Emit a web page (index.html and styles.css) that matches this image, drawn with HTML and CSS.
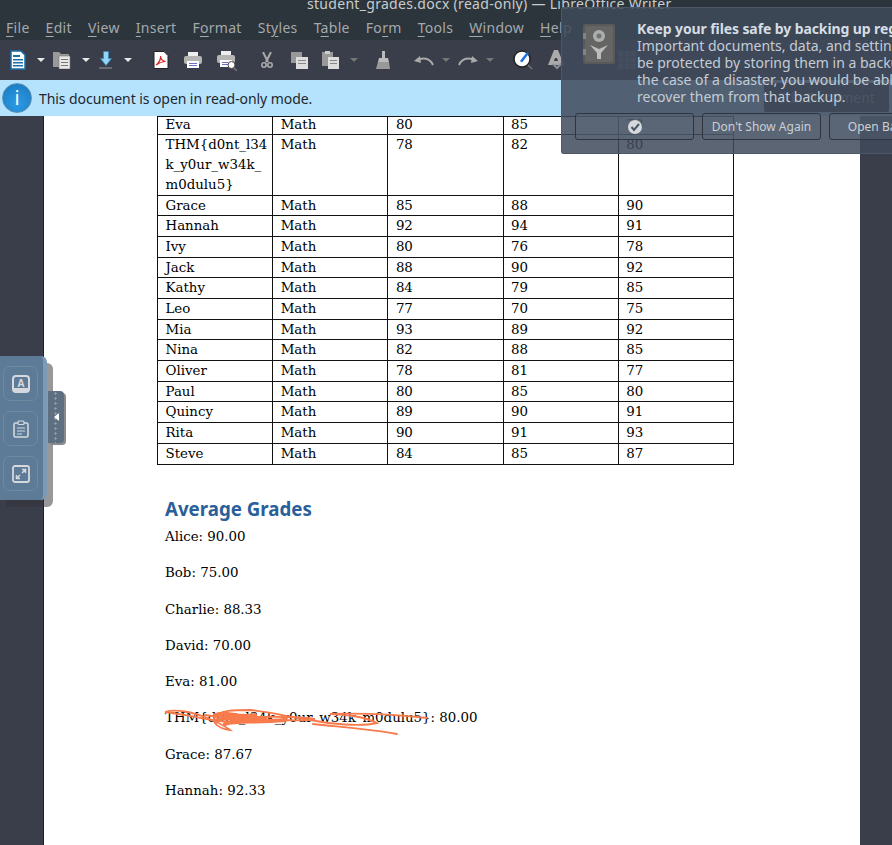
FILE: index.html
```html
<!DOCTYPE html>
<html lang="en">
<head>
    <meta charset="UTF-8">
    <meta name="viewport" content="width=device-width, initial-scale=1.0">
    <title>student_grades.docx (read-only) — LibreOffice Writer</title>
    <link rel="stylesheet" href="styles.css">
</head>
<body>
    <header class="titlebar">student_grades.docx (read-only) — LibreOffice Writer</header>

    <nav class="menubar">
        <span><u>F</u>ile</span>
        <span><u>E</u>dit</span>
        <span><u>V</u>iew</span>
        <span><u>I</u>nsert</span>
        <span>F<u>o</u>rmat</span>
        <span>St<u>y</u>les</span>
        <span>T<u>a</u>ble</span>
        <span>Fo<u>r</u>m</span>
        <span><u>T</u>ools</span>
        <span><u>W</u>indow</span>
        <span><u>H</u>elp</span>
    </nav>

    <div class="toolbar">
        <svg class="tool w-doc" viewBox="0 0 16 20"><path d="M1 1h10l4 4v14H1z" fill="#fff" stroke="#1b6ea8" stroke-width="1.5"/><path d="M3 5h7v2H3zM3 9h10v1.5H3zM3 12h10v1.5H3zM3 15h10v1.5H3z" fill="#1b6ea8"/></svg>
        <i class="drop"></i>
        <svg class="tool w-open" viewBox="0 0 18 18"><path d="M0 1h6l2 2h8v13H0z" fill="#9a9a9a"/><path d="M6 5h11v13H6z" fill="#e8e8e8" stroke="#777" stroke-width=".6"/><path d="M8 8h7v1H8zM8 11h7v1H8zM8 14h7v1H8z" fill="#777"/></svg>
        <i class="drop"></i>
        <svg class="tool w-save" viewBox="0 0 14 18"><path d="M4.500 .5h5v7h3l-5.500 7-5.500-7h3z" fill="#8fd6f7" stroke="#3a88b5" stroke-width=".8"/><path d="M0 17h13" stroke="#8a8d96" stroke-width="1.2"/></svg>
        <i class="drop"></i>
        <svg class="tool w-pdf" viewBox="0 0 16 18"><path d="M1 .5h10l4 4v13H1z" fill="#fff" stroke="#222"/><path d="M3 14c3-2 5-6 4.500-9 0 3 2 5 5 5.500-3 0-6 1-9.500 3.500z" fill="none" stroke="#d8282f" stroke-width="1.200"/></svg>
        <svg class="tool w-print" viewBox="0 0 18 18"><path d="M4 1h10v5H4z" fill="#eee"/><rect y="5" width="18" height="8" rx="2" fill="#b5b5b5"/><path d="M3 10h12v7H3z" fill="#fff"/><path d="M5 12h8v1H5zM5 14h8v1H5z" fill="#6b6fd0"/></svg>
        <svg class="tool w-preview" viewBox="0 0 21 21"><path d="M4 1h10v5H4z" fill="#eee"/><rect y="5" width="18" height="8" rx="2" fill="#b5b5b5"/><path d="M3 10h12v7H3z" fill="#fff"/><path d="M5 12h6v1H5zM5 14h6v1H5z" fill="#6b6fd0"/><circle cx="14.500" cy="15" r="3.500" fill="#fff" stroke="#444"/><path d="M17 18l3 3" stroke="#777" stroke-width="1.500"/></svg>
        <svg class="tool w-cut" viewBox="0 0 12 16"><path d="M2 0l5 10M10 0L5 10" stroke="#aaa" stroke-width="2"/><circle cx="3" cy="13" r="2.200" fill="none" stroke="#aaa" stroke-width="1.600"/><circle cx="9" cy="13" r="2.200" fill="none" stroke="#aaa" stroke-width="1.600"/></svg>
        <svg class="tool w-copy" viewBox="0 0 17 17"><path d="M0 0h11v11H0z" fill="#999"/><path d="M5 5h12v12H5z" fill="#ddd"/><path d="M7 8h8v1H7zM7 11h8v1H7z" fill="#888"/></svg>
        <svg class="tool w-paste" viewBox="0 0 17 18"><path d="M0 1h11v14H0z" fill="#999"/><path d="M3 0h5v3H3z" fill="#ccc"/><path d="M6 6h11v12H6z" fill="#ddd"/><path d="M8 9h7v1H8zM8 12h7v1H8z" fill="#888"/></svg>
        <i class="drop dim"></i>
        <svg class="tool w-brush" viewBox="0 0 15 18"><path d="M6 0h3v7h3l1 4H2l1-4h3z" fill="#bbb"/><path d="M2 11h11l1 7H0z" fill="#999"/></svg>
        <svg class="tool w-undo" viewBox="0 0 20 12"><path d="M19 11C16 4 9 3 3 6" fill="none" stroke="#aaa" stroke-width="2"/><path d="M0 7l6-5 1 7z" fill="#aaa"/></svg>
        <i class="drop dim tight"></i>
        <svg class="tool w-redo" viewBox="0 0 20 12"><path d="M1 11C4 4 11 3 17 6" fill="none" stroke="#aaa" stroke-width="2"/><path d="M20 7l-6-5-1 7z" fill="#aaa"/></svg>
        <i class="drop dim tight"></i>
        <svg class="tool w-spell" viewBox="0 0 20 20"><circle cx="9" cy="9" r="8" fill="#fff" stroke="#222" stroke-width="1.500"/><path d="M7 11l7-9 2 1.500-7 9z" fill="#1c6fd8"/><path d="M15 15l4 4" stroke="#777" stroke-width="1.500"/></svg>
        <svg class="tool w-auto" viewBox="0 0 19 20"><path d="M7 0h4l6 15H1z" fill="#aaa"/><path d="M8 8h2l1 3H7z" fill="#3a3d4a"/><path d="M6 14l4 4 6-6" fill="none" stroke="#8a8d96" stroke-width="2"/></svg>
        <svg class="tool w-behind" viewBox="0 0 18 18"><path d="M0 0h18v18H0z" fill="#5a6878"/><path d="M0 6h18M0 12h18M6 0v18M12 0v18" stroke="#3a3d4a"/></svg>
    </div>

    <div class="infobar">
        <span class="info-icon">i</span>
        <span>This document is open in read-only mode.</span>
        <span class="edit-btn">Edit Document</span>
    </div>

    <main class="workspace">
        <article class="page">
            <table class="grades">
                <tr class="first"><td>Eva</td><td>Math</td><td>80</td><td>85</td><td>78</td></tr>
                <tr class="tall"><td>THM{d0nt_l34<br>k_y0ur_w34k_<br>m0dulu5}</td><td>Math</td><td>78</td><td>82</td><td>80</td></tr>
                <tr class="short"><td>Grace</td><td>Math</td><td>85</td><td>88</td><td>90</td></tr>
                <tr><td>Hannah</td><td>Math</td><td>92</td><td>94</td><td>91</td></tr>
                <tr><td>Ivy</td><td>Math</td><td>80</td><td>76</td><td>78</td></tr>
                <tr class="short"><td>Jack</td><td>Math</td><td>88</td><td>90</td><td>92</td></tr>
                <tr><td>Kathy</td><td>Math</td><td>84</td><td>79</td><td>85</td></tr>
                <tr><td>Leo</td><td>Math</td><td>77</td><td>70</td><td>75</td></tr>
                <tr class="short"><td>Mia</td><td>Math</td><td>93</td><td>89</td><td>92</td></tr>
                <tr><td>Nina</td><td>Math</td><td>82</td><td>88</td><td>85</td></tr>
                <tr><td>Oliver</td><td>Math</td><td>78</td><td>81</td><td>77</td></tr>
                <tr class="short"><td>Paul</td><td>Math</td><td>80</td><td>85</td><td>80</td></tr>
                <tr><td>Quincy</td><td>Math</td><td>89</td><td>90</td><td>91</td></tr>
                <tr><td>Rita</td><td>Math</td><td>90</td><td>91</td><td>93</td></tr>
                <tr><td>Steve</td><td>Math</td><td>84</td><td>85</td><td>87</td></tr>
            </table>

            <h2>Average Grades</h2>
            <p>Alice: 90.00</p>
            <p>Bob: 75.00</p>
            <p>Charlie: 88.33</p>
            <p>David: 70.00</p>
            <p>Eva: 81.00</p>
            <p class="flag-line">THM{d0nt_l34k_y0ur_w34k_m0dulu5}: 80.00
                <svg class="scribble" viewBox="0 0 270 32">
                    <path d="M0 5C12 1 28 6 40 10C50 14 60 19 65 23C55 22 46 16 50 10C54 3 70 3 85 3C105 5 125 10 145 13C165 17 195 20 212 16C200 10 180 7 165 7C200 6 235 8 262 11"/>
                    <path d="M0 5C20 7 40 13 62 15"/>
                    <path d="M40 8C70 14 110 6 150 12C130 16 100 10 85 14"/>
                    <path class="thick" d="M50 8C62 3 72 12 90 8M52 13C65 8 78 16 100 11M60 17C70 13 90 16 120 13"/>
                    <path d="M148 17C175 20 205 22 232 27"/>
                </svg>
            </p>
            <p>Grace: 87.67</p>
            <p>Hannah: 92.33</p>
        </article>
    </main>

    <aside class="sidebar">
        <div class="side-btn">
            <svg viewBox="0 0 18 18"><rect x="1" y="1" width="16" height="16" rx="3" fill="none" stroke="#d5d9dd" stroke-width="2"/><path d="M1 13h16v2a2 2 0 0 1-2 2H3a2 2 0 0 1-2-2z" fill="#d5d9dd"/><text x="9" y="12" class="side-letter">A</text></svg>
        </div>
        <div class="side-btn">
            <svg viewBox="0 0 18 18"><rect x="2" y="3" width="14" height="14" rx="1.500" fill="none" stroke="#d5d9dd" stroke-width="1.600"/><rect x="6" y="1" width="6" height="3.500" rx="1" fill="#5d7a96" stroke="#d5d9dd" stroke-width="1.200"/><path d="M5 8h8M5 11h8M5 14h5" stroke="#d5d9dd"/></svg>
        </div>
        <div class="side-btn">
            <svg viewBox="0 0 18 18"><rect x="1" y="1" width="16" height="16" rx="2" fill="none" stroke="#d5d9dd" stroke-width="1.800"/><path d="M10 8l3-3M10 4.500h3.500V8M8 10l-3 3M4.500 10v3.500H8" fill="none" stroke="#d5d9dd" stroke-width="1.500"/></svg>
        </div>
    </aside>
    <div class="side-handle"><i></i></div>

    <section class="popup">
        <div class="popup-top">
            <svg class="safe" viewBox="0 0 32 40"><rect width="32" height="40" rx="2" fill="#5b5b5b"/><rect x="2" y="2" width="28" height="36" fill="#6a6a66"/><path d="M0 9h3v6H0zM0 25h3v6H0z" fill="#8a8a8a"/><circle cx="16" cy="12" r="6" fill="#b9b9b9"/><circle cx="16" cy="12" r="2.500" fill="#777"/><path d="M7 21l9 4 9-4-7 8v6h-4v-6z" fill="#c9c9c9"/></svg>
            <div class="popup-text">
                <strong>Keep your files safe by backing up regularly</strong>
                <span>Important documents, data, and settings can</span>
                <span>be protected by storing them in a backup. In</span>
                <span>the case of a disaster, you would be able to</span>
                <span>recover them from that backup.</span>
            </div>
        </div>
        <div class="popup-actions">
            <span class="popup-btn">
                <svg viewBox="0 0 14 14"><circle cx="7" cy="7" r="7" fill="#d5d8dc"/><path d="M3.500 7l2.500 3 5-6" fill="none" stroke="#4a5666" stroke-width="2"/></svg>
            </span>
            <span class="popup-btn">Don't Show Again</span>
            <span class="popup-btn">Open Backups</span>
        </div>
    </section>
</body>
</html>
```

FILE: styles.css
```css
html, body {
    margin: 0;
    padding: 0;
    height: 845px;
    overflow: hidden;
}

body {
    display: flex;
    flex-direction: column;
    position: relative;
    background-color: #3a3d4a;
    font-family: "Noto Sans", sans-serif;
    color: #222;
}

.titlebar {
    height: 18px;
    flex: none;
    box-sizing: border-box;
    padding-left: 307px;
    line-height: 8px;
    font-size: 14px;
    letter-spacing: 0.3px;
    white-space: nowrap;
    overflow: hidden;
    background: #2b353b;
    color: #c9ccce;
}

.menubar {
    height: 18px;
    flex: none;
    display: flex;
    gap: 16px;
    padding: 0 0 4px 6px;
    align-items: center;
    font-size: 14px;
    letter-spacing: 0.3px;
    white-space: nowrap;
    background: #2b353b;
    color: #a5a9ad;
}

.menubar u {
    text-underline-offset: 3px;
}

.toolbar {
    height: 40px;
    flex: none;
    display: flex;
    align-items: center;
    padding-left: 10px;
    background: #3a3d4a;
}

.tool {
    flex: none;
    display: block;
}

.drop {
    flex: none;
    width: 0;
    height: 0;
    margin: 0 9px 0 11px;
    border-left: 4px solid transparent;
    border-right: 4px solid transparent;
    border-top: 4px solid #e8e8e8;
}

.drop.dim {
    border-top-color: #777;
}

.drop.tight {
    margin-left: 8px;
    margin-right: 8px;
}

.w-doc { width: 16px; height: 20px; }
.w-open { width: 18px; height: 18px; margin-left: -1px; }
.w-save { width: 14px; height: 18px; }
.w-pdf { width: 16px; height: 18px; margin-left: 12px; }
.w-print { width: 18px; height: 18px; margin-left: 15px; }
.w-preview { width: 21px; height: 21px; margin-left: 15px; }
.w-cut { width: 12px; height: 16px; margin-left: 23px; }
.w-copy { width: 17px; height: 17px; margin-left: 18px; }
.w-paste { width: 17px; height: 18px; margin-left: 14px; }
.w-brush { width: 15px; height: 18px; margin-left: 9px; }
.w-undo { width: 20px; height: 12px; margin-left: 23px; }
.w-redo { width: 20px; height: 12px; }
.w-spell { width: 20px; height: 20px; margin-left: 11px; }
.w-auto { width: 19px; height: 20px; margin-left: 14px; }
.w-behind { width: 18px; height: 18px; margin-left: 52px; }

.infobar {
    height: 36px;
    flex: none;
    box-sizing: border-box;
    display: flex;
    align-items: center;
    gap: 7px;
    padding-left: 2px;
    font-size: 14px;
    letter-spacing: -0.07px;
    background: #b5e3fd;
    color: #1d2730;
    position: relative;
}

.info-icon {
    width: 30px;
    height: 30px;
    border-radius: 50%;
    box-sizing: border-box;
    border: 1px solid #5f8fb0;
    background: radial-gradient(circle at 50% 70%, #2a9be6, #1a78bd);
    color: #fff;
    font-size: 20px;
    line-height: 28px;
    text-align: center;
}

.edit-btn {
    position: absolute;
    left: 764px;
    top: 3px;
    width: 125px;
    height: 29px;
    line-height: 29px;
    text-align: center;
    white-space: nowrap;
    background: #3a3d4a;
    color: #8e939c;
    font-size: 14px;
    border-radius: 2px;
}

.workspace {
    flex: 1;
    min-height: 0;
    padding-left: 43px;
    background: #3a3d4a;
}

.page {
    width: 817px;
    height: 100%;
    box-sizing: border-box;
    padding-left: 113px;
    background: #fff;
    border-left: 1px solid #1e2024;
    font-family: "DejaVu Serif", serif;
    font-size: 13.36px;
    color: #000;
}

.grades {
    border-collapse: collapse;
    table-layout: fixed;
    width: 577px;
    line-height: 19px;
}

.grades td {
    border: 1px solid #111;
    padding: 0 0 0 7.500px;
    vertical-align: top;
}

.grades tr {
    height: 21px;
}

.grades tr.short {
    height: 20px;
}

.grades tr.first {
    height: 18px;
}

.grades tr.first td {
    line-height: 16px;
}

.grades tr.tall {
    height: 60px;
}

.grades tr.tall td {
    line-height: 20px;
}

.page h2 {
    margin: 30px 0 5px 8px;
    font-family: "Noto Sans", sans-serif;
    font-size: 18.7px;
    line-height: 27px;
    font-weight: 700;
    color: #2a6099;
}

.page p {
    margin: 0 0 16.3px 8px;
    line-height: 20px;
    position: relative;
}

.scribble {
    position: absolute;
    left: 0;
    top: -1px;
    width: 270px;
    height: 32px;
    fill: none;
    stroke: #f97b4c;
    stroke-width: 1.800;
    stroke-linecap: round;
}

.scribble .thick {
    stroke-width: 4;
}

.sidebar {
    position: absolute;
    left: 0;
    top: 356px;
    width: 47px;
    height: 144px;
    box-sizing: border-box;
    padding: 10px 0 0 3px;
    display: flex;
    flex-direction: column;
    gap: 10px;
    background: #5d7a96;
    border-right: 4px solid #7d9ab4;
    border-radius: 0 6px 6px 0;
    box-shadow: 6px 7px 0 rgba(50, 50, 56, 0.5);
}

.side-btn {
    width: 35px;
    height: 35px;
    box-sizing: border-box;
    padding: 8px;
    border: 1px solid #71899f;
    border-radius: 7px;
}

.side-btn svg {
    display: block;
    width: 18px;
    height: 18px;
}

.side-letter {
    font-family: "Noto Sans", sans-serif;
    font-size: 10px;
    font-weight: 700;
    text-anchor: middle;
    fill: #d5d9dd;
}

.side-handle {
    position: absolute;
    left: 48px;
    top: 391px;
    width: 16px;
    height: 52px;
    background-color: #5f6f82;
    background-image: radial-gradient(circle, #8a9aac 1px, transparent 1.2px);
    background-size: 5px 5px;
    background-position: 5px 0;
    background-repeat: repeat-y;
    border-radius: 0 4px 4px 0;
    box-shadow: 2px 2px 0 #8a8a8a;
    display: flex;
    align-items: center;
    justify-content: center;
}

.side-handle i {
    width: 0;
    height: 0;
    border-top: 4px solid transparent;
    border-bottom: 4px solid transparent;
    border-right: 5px solid #fff;
}

.popup {
    position: absolute;
    left: 561px;
    top: 7px;
    width: 331px;
    height: 147px;
    box-sizing: border-box;
    padding: 16px 0 0 13px;
    overflow: hidden;
    background: rgba(64, 74, 90, 0.85);
    border: 1px solid #4e5766;
    border-right: none;
    border-radius: 3px 0 0 3px;
    color: #c4ccd6;
    font-size: 14px;
}

.popup-top {
    display: flex;
    gap: 22px;
    padding-left: 8px;
    height: 89px;
}

.safe {
    width: 32px;
    height: 40px;
    flex: none;
    opacity: 0.9;
}

.popup-text {
    margin-top: -4px;
    line-height: 17px;
    white-space: nowrap;
}

.popup-text strong,
.popup-text span {
    display: block;
}

.popup-text strong {
    letter-spacing: -0.1px;
    color: #d6dde5;
}

.popup-actions {
    display: flex;
    gap: 8px;
}

.popup-btn {
    width: 119px;
    height: 27px;
    flex: none;
    box-sizing: border-box;
    border: 1px solid #2e3540;
    border-radius: 3px;
    background: rgba(88, 102, 120, 0.4);
    display: flex;
    align-items: center;
    justify-content: center;
    font-size: 12px;
    white-space: nowrap;
    color: #c9d0d8;
}

.popup-btn svg {
    width: 14px;
    height: 14px;
}
```
